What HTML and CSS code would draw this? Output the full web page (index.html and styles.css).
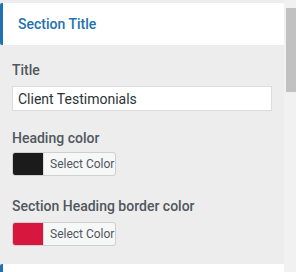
FILE: index.html
```html
<!DOCTYPE html>
<html lang="en">
<head>
    <meta charset="UTF-8">
    <meta name="viewport" content="width=device-width, initial-scale=1.0">
    <title>Section Settings</title>
    <link rel="stylesheet" href="styles.css">
</head>
<body>
    <div class="wrap">
        <div class="panel">
            <!-- Section header -->
            <div class="section-head">Section Title</div>

            <div class="fields">
                <div class="field field-title">
                    <label for="title">Title</label>
                    <input type="text" id="title" value="Client Testimonials">
                </div>

                <div class="field field-heading">
                    <label>Heading color</label>
                    <button class="color-btn">
                        <span class="swatch swatch-dark"></span>
                        <span class="color-text">Select Color</span>
                    </button>
                </div>

                <div class="field field-border">
                    <label>Section Heading border color</label>
                    <button class="color-btn">
                        <span class="swatch swatch-red"></span>
                        <span class="color-text">Select Color</span>
                    </button>
                </div>
            </div>

            <!-- Next section (cut off) -->
            <div class="section-head section-next"></div>
        </div>

        <div class="scrollbar">
            <div class="thumb"></div>
        </div>
    </div>
</body>
</html>
```

FILE: styles.css
```css
body {
    margin: 0;
    background-color: #ededed;
    font-family: Roboto, "Noto Sans", sans-serif;
    color: #50575e;
    overflow: hidden;
}

.wrap {
    display: flex;
    height: 272px;
    overflow: hidden;
}

.panel {
    width: 284px;
    padding-top: 3px;
    overflow: hidden;
}

.section-head {
    display: flex;
    align-items: center;
    height: 42px;
    padding-left: 15px;
    background: #fff;
    border-left: 3px solid #2271b1;
    border-radius: 2px 0 0 2px;
    color: #2271b1;
    font-size: 14px;
    font-weight: 500;
}

.section-next {
    margin-top: 18px;
}

.fields {
    padding: 0 12px;
}

.field label {
    display: block;
    font-size: 14px;
    line-height: 18px;
    font-weight: 500;
    color: #50575e;
}

.field-title {
    margin-top: 16px;
}

.field-title label {
    margin-bottom: 7px;
}

.field-heading {
    margin-top: 18px;
}

.field-heading label {
    margin-bottom: 5px;
}

.field-border {
    margin-top: 21px;
}

.field-border label {
    margin-bottom: 7px;
}

input {
    box-sizing: border-box;
    width: 260px;
    height: 25px;
    margin: 0;
    padding: 0 5px;
    border: 1px solid #dcdcdc;
    border-radius: 0;
    background: #fff;
    font-family: Roboto, "Noto Sans", sans-serif;
    font-size: 14px;
    color: #2c3338;
}

.color-btn {
    display: flex;
    box-sizing: border-box;
    width: 104px;
    height: 24px;
    margin: 0;
    padding: 0;
    border: 1px solid #cfcfcf;
    border-radius: 3px;
    background: #f6f7f7;
    overflow: hidden;
    cursor: pointer;
}

.swatch {
    flex: none;
    width: 30px;
    height: 100%;
}

.swatch-dark {
    background: #1b1b1b;
}

.swatch-red {
    background: #d8173f;
}

.color-text {
    display: flex;
    flex: 1;
    align-items: center;
    height: 100%;
    padding-left: 6px;
    border-left: 1px solid #dcdcdc;
    white-space: nowrap;
    font-family: Roboto, "Noto Sans", sans-serif;
    font-size: 12px;
    color: #50575e;
}

.scrollbar {
    width: 12px;
    background: #f1f1f1;
    position: relative;
}

.thumb {
    position: absolute;
    top: 8px;
    left: 2px;
    right: 0;
    height: 84px;
    background: #c1c1c1;
}
```
